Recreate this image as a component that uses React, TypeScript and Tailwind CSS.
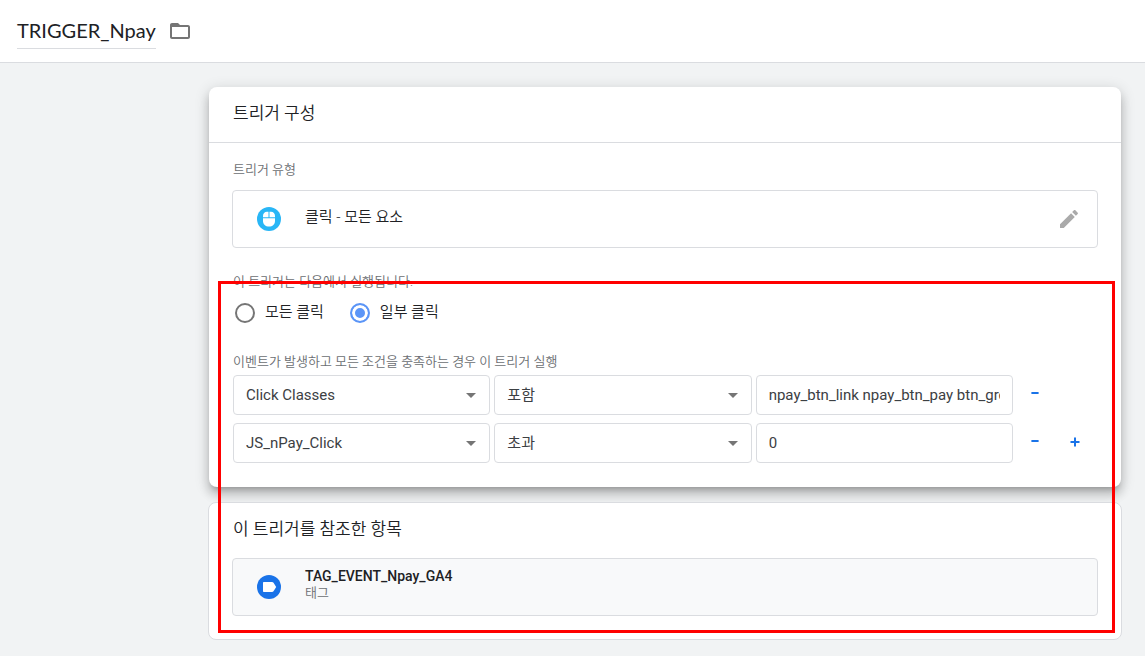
import React, { useState } from 'react';

const conditions = [
  { variable: 'Click Classes', operator: '포함', value: 'npay_btn_link npay_btn_pay btn_green' },
  { variable: 'JS_nPay_Click', operator: '초과', value: '0' },
];

export default function App() {
  const [scope, setScope] = useState('some');

  return (
    <div className="min-h-screen bg-[#f1f3f4] font-['Roboto','Noto_Sans_CJK_KR',sans-serif] text-[#202124]">
      <header className="flex h-[63px] items-start gap-3 border-b border-[#dadce0] bg-white px-[17px] pt-4">
        <h1 className="border-b border-[#dadce0] pb-1 font-['Lato','Noto_Sans_CJK_KR',sans-serif] text-xl leading-7">
          TRIGGER_Npay
        </h1>
        <button type="button" aria-label="폴더" className="pt-[3px] text-[#757575]">
          <FolderIcon />
        </button>
      </header>

      <main className="relative mr-[23px] ml-[208px] pt-6 pb-4">
        <section className="mx-px rounded-lg bg-white shadow-[0_5px_5px_-3px_rgba(0,0,0,0.2),0_8px_10px_1px_rgba(0,0,0,0.14),0_3px_14px_2px_rgba(0,0,0,0.12)]">
          <h2 className="h-14 border-b border-[#dadce0] px-6 pt-3 text-[17px] leading-7 font-[350]">트리거 구성</h2>

          <div className="px-[23px] pt-[17px] pb-6">
            <h3 className="pl-px text-[13px] leading-5 font-[350] text-[#6b6e72]">트리거 유형</h3>
            <button
              type="button"
              className="mt-[10px] flex h-[58px] w-full items-center rounded border border-[#dadce0] pr-4 pl-6 text-left"
            >
              <MouseIcon />
              <span className="ml-6 flex-1 pb-1 text-[15px] leading-5 font-[350]">클릭 - 모든 요소</span>
              <PencilIcon />
            </button>

            <fieldset className="mt-6">
              <legend className="pl-px text-[13px] leading-5 font-[350] text-[#6b6e72]">
                이 트리거는 다음에서 실행됩니다.
              </legend>
              <div className="flex gap-[26px] pt-[9px] pl-[3px]">
                <Radio label="모든 클릭" checked={scope === 'all'} onChange={() => setScope('all')} />
                <Radio label="일부 클릭" checked={scope === 'some'} onChange={() => setScope('some')} />
              </div>
            </fieldset>

            <div className="pt-[29px] pl-px">
              <h3 className="text-[13px] leading-5 font-[350] text-[#6b6e72]">
                이벤트가 발생하고 모든 조건을 충족하는 경우 이 트리거 실행
              </h3>
              <div className="mt-[3px] flex flex-col gap-2">
                {conditions.map((c, i) => (
                  <div key={c.variable} className="grid grid-cols-[1fr_1fr_1fr_81px] gap-1">
                    <Dropdown label="변수" value={c.variable} />
                    <Dropdown label="연산자" value={c.operator} />
                    <input
                      aria-label="값"
                      defaultValue={c.value}
                      className="h-10 w-full min-w-0 rounded border border-[#dadce0] px-3 text-[15px] text-[#3c4043]"
                    />
                    <div className="flex text-[#1a73e8]">
                      <button type="button" aria-label="조건 삭제" className="flex h-9 w-9 items-center justify-center">
                        <svg width="8" height="2" viewBox="0 0 8 2" fill="currentColor">
                          <path d="M.4 0h7.200v2H.4z" />
                        </svg>
                      </button>
                      {i === conditions.length - 1 && (
                        <button type="button" aria-label="조건 추가" className="flex h-9 w-11 items-center justify-center pt-px">
                          <svg width="10" height="10" viewBox="0 0 10 10" fill="currentColor">
                            <path d="M4 .5h2V4h3.500v2H6v3.500H4V6H.5V4H4z" />
                          </svg>
                        </button>
                      )}
                    </div>
                  </div>
                ))}
              </div>
            </div>
          </div>
        </section>

        <section className="relative mt-[15px] rounded-lg border border-[#dadce0] bg-white px-[23px] pt-3 pb-[23px]">
          <h2 className="pl-px text-[17px] leading-7 font-[350]">이 트리거를 참조한 항목</h2>
          <a
            href="#tag"
            className="mt-[15px] flex h-[58px] items-center rounded border border-[#dadce0] bg-[#f8f9fa] px-6"
          >
            <TagIcon />
            <span className="ml-6 flex flex-col pb-1">
              <span className="text-sm leading-4 font-medium">TAG_EVENT_Npay_GA4</span>
              <span className="text-[13px] leading-[18px] font-[350] text-[#6b6e72]">태그</span>
            </span>
          </a>
        </section>

        {/* Highlight over the firing conditions and references */}
        <div className="pointer-events-none absolute top-[218px] right-[7px] bottom-[23px] left-[10px] border-3 border-[#ff0000]" />
      </main>
    </div>
  );
}

function Radio({ label, checked, onChange }: { label: string; checked: boolean; onChange: () => void }) {
  return (
    <label className="flex items-center gap-[10px] text-[15px] leading-5 font-[350]">
      <input
        type="radio"
        name="scope"
        checked={checked}
        onChange={onChange}
        className="mt-[2px] size-5 appearance-none rounded-full border-2 border-[#757575] bg-white checked:border-[#5b95f7] checked:bg-[#5b95f7] checked:shadow-[inset_0_0_0_3px_#fff]"
      />
      {label}
    </label>
  );
}

function Dropdown({ label, value }: { label: string; value: string }) {
  return (
    <div className="relative min-w-0">
      <select
        aria-label={label}
        defaultValue={value}
        className="h-10 w-full appearance-none rounded border border-[#dadce0] bg-white px-3 text-[15px] text-[#3c4043]"
      >
        <option>{value}</option>
      </select>
      <svg width="10" height="5" viewBox="0 0 10 5" className="pointer-events-none absolute top-[18px] right-[14px]">
        <path d="M0 0h10L5 5z" fill="#757575" />
      </svg>
    </div>
  );
}

function FolderIcon() {
  return (
    <svg width="24" height="24" viewBox="0 0 24 24" fill="currentColor">
      <path d="M20 6h-8l-2-2H4c-1.1 0-2 .9-2 2v12c0 1.1.9 2 2 2h16c1.1 0 2-.9 2-2V8c0-1.1-.9-2-2-2zm0 12H4V8h16v10z" />
    </svg>
  );
}

function PencilIcon() {
  return (
    <svg width="24" height="24" viewBox="0 0 24 24" fill="#aaa">
      <path d="M3 17.25V21h3.75L17.81 9.94l-3.75-3.75L3 17.25zM20.71 7.04c.39-.39.39-1.02 0-1.41l-2.34-2.34c-.39-.39-1.02-.39-1.41 0l-1.83 1.83 3.75 3.75 1.83-1.83z" />
    </svg>
  );
}

function MouseIcon() {
  return (
    <svg width="24" height="24" viewBox="0 0 24 24" className="shrink-0">
      <circle cx="12" cy="12" r="12" fill="#29b6f6" />
      <path d="M6 11.200V14c0 3.500 2.500 5.500 6 5.500s6-2 6-5.500v-2.800z" fill="#fff" />
      <path d="M11.500 4.700H10C7.500 4.700 6 6.500 6 9v1.300h5.500zM12.500 4.700v5.600H18V9c0-2.500-1.500-4.300-4-4.300z" fill="#fff" />
    </svg>
  );
}

function TagIcon() {
  return (
    <svg width="24" height="24" viewBox="0 0 24 24" className="shrink-0">
      <circle cx="12" cy="12" r="12" fill="#1a73e8" />
      <path d="M7 7h8c.6 0 1.100.3 1.500.8L19.200 12l-2.700 4.200c-.4.500-.9.800-1.500.8H7c-.6 0-1-.4-1-1V8c0-.6.4-1 1-1z" fill="#fff" />
    </svg>
  );
}
